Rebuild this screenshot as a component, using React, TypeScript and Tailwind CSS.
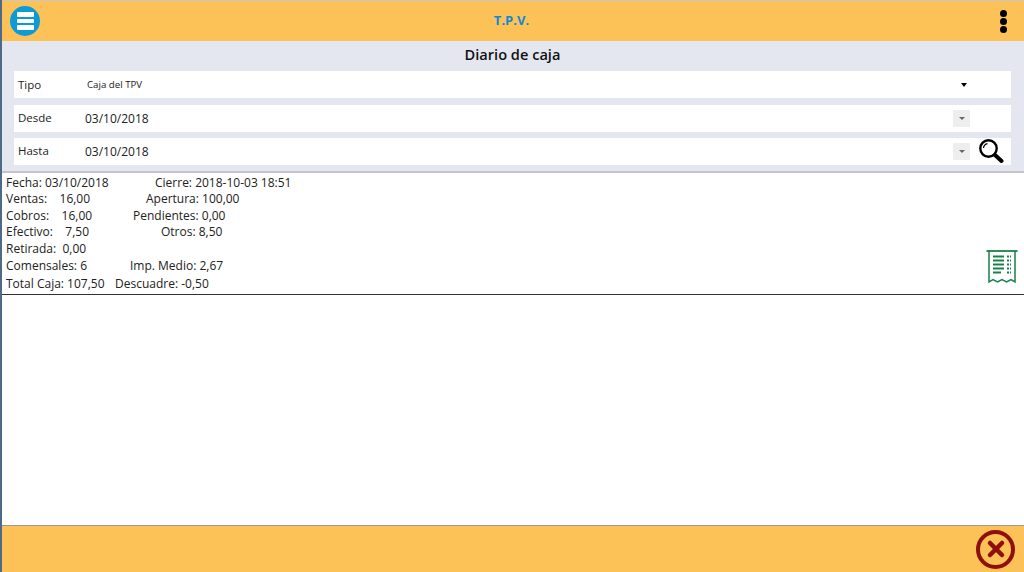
import { X } from 'lucide-react';

const font = { fontFamily: '"Open Sans", "Noto Sans", sans-serif' };

function MenuIcon() {
  return (
    <div className="flex h-[30px] w-[30px] flex-col items-center justify-center gap-[2px] rounded-full bg-[#0d9bd8]">
      <span className="h-[5px] w-[17px] rounded-[1px] bg-white" />
      <span className="h-[4px] w-[17px] rounded-[1px] bg-white" />
      <span className="h-[5px] w-[17px] rounded-[1px] bg-white" />
    </div>
  );
}

function DateArrow() {
  return (
    <div className="flex h-[17px] w-[17px] items-center justify-center bg-[#eeeeee]">
      <span className="h-0 w-0 border-x-[3px] border-t-[3px] border-x-transparent border-t-[#666666]" />
    </div>
  );
}

function SearchIcon() {
  return (
    <svg width="26" height="26" viewBox="0 0 26 26" fill="none" stroke="#000">
      <circle cx="10.5" cy="10.5" r="8.2" strokeWidth="2.4" />
      <path d="M5.5 10a5 5 0 0 1 4-4.4" strokeWidth="1.2" />
      <path d="M17 17l6.5 6" strokeWidth="4" strokeLinecap="round" />
    </svg>
  );
}

function ReceiptIcon() {
  return (
    <svg width="32" height="36" viewBox="0 0 32 36" fill="none" stroke="#1a8048">
      <path d="M0.5 1h31" strokeWidth="1.8" />
      <path d="M3 1v31l4-2.5 4.5 2.5 4.5-2.5 4.5 2.5 4.5-2.5 4 2.5V1" strokeWidth="1.5" />
      <path d="M7 6.5h11M7 10.5h11M7 14.5h11M7 18.5h11M7 22.5h8" strokeWidth="2.2" />
      <path d="M21 6.5h4M21 10.5h4M21 14.5h4M21 18.5h4M21 22.5h4" strokeWidth="2.2" strokeDasharray="2 1" />
    </svg>
  );
}

function FormRow({ label, children, className, labelClass }: { label: string; children: React.ReactNode; className?: string; labelClass?: string }) {
  return (
    <div className={`flex h-[27px] items-center bg-white pl-[4px] text-[#222222] ${className ?? ''}`}>
      <span className={`w-[67px] text-[11.5px] ${labelClass ?? ''}`}>{label}</span>
      {children}
    </div>
  );
}

const summary = [
  { h: 'h-[14px]', left: 'Fecha: 03/10/2018', w: 'w-[149px]', right: 'Cierre: 2018-10-03 18:51' },
  { h: 'h-[17px]', left: 'Ventas:\u00a0\u00a0\u00a0 16,00', w: 'w-[140px]', right: 'Apertura: 100,00' },
  { h: 'h-[17px]', left: 'Cobros:\u00a0\u00a0\u00a0 16,00', w: 'w-[127px]', right: 'Pendientes: 0,00' },
  { h: 'h-[16px]', left: 'Efectivo:\u00a0\u00a0\u00a0 7,50', w: 'w-[155px]', right: 'Otros: 8,50' },
  { h: 'h-[17px]', left: 'Retirada:\u00a0 0,00', w: 'w-[140px]', right: '' },
  { h: 'h-[17px]', left: 'Comensales: 6', w: 'w-[124px]', right: 'Imp. Medio: 2,67' },
  { h: 'h-[20px]', left: 'Total Caja: 107,50', w: 'w-[109px]', right: 'Descuadre: -0,50' },
];

export default function App() {
  return (
    <div className="flex h-[572px] w-[1024px] flex-col overflow-hidden border-l-2 border-[#4f6a86] bg-white" style={font}>
      <header className="grid h-[41px] shrink-0 grid-cols-3 items-center border-t border-[#c8c8c8] bg-[#fcc157] pl-[8px] pr-[17px]">
        <MenuIcon />
        <span className="ml-[6px] justify-self-center text-[13px] font-bold text-[#1488d8]">T.P.V.</span>
        <div className="flex flex-col gap-[1px] justify-self-end">
          <span className="h-[7px] w-[7px] rounded-full bg-black" />
          <span className="h-[7px] w-[7px] rounded-full bg-black" />
          <span className="h-[7px] w-[7px] rounded-full bg-black" />
        </div>
      </header>

      <section className="flex h-[132px] shrink-0 flex-col border-b-2 border-[#c4c6cb] bg-[#e4e7ef] pl-[12px] pr-[13px]">
        <h1 className="mb-[2px] flex h-[28px] items-center justify-center text-[14.6px] font-semibold text-[#111111]">Diario de caja</h1>
        <FormRow label="Tipo">
          <span className="ml-[2px] mt-[2px] text-[9.7px]">Caja del TPV</span>
          <span className="ml-[819px] h-0 w-0 border-x-[3.5px] border-t-[4px] border-x-transparent border-t-black" />
        </FormRow>
        <FormRow label="Desde" className="mt-[7px]" labelClass="-mt-px">
          <span className="mt-[1px] w-[868px] text-[12px]">03/10/2018</span>
          <DateArrow />
        </FormRow>
        <FormRow label="Hasta" className="relative mt-[6px]" labelClass="-mt-[2px]">
          <span className="mt-[1px] w-[868px] text-[12px]">03/10/2018</span>
          <DateArrow />
          <div className="absolute right-[7px] top-0">
            <SearchIcon />
          </div>
        </FormRow>
      </section>

      <section className="flex h-[122px] shrink-0 items-end justify-between border-b border-[#333333] pl-[4px] pr-[6px] text-[12px] text-[#222222]">
        <div className="flex flex-col">
          {summary.map((r) => (
            <div key={r.left} className={`flex items-center ${r.h}`}>
              <span className={r.w}>{r.left}</span>
              <span>{r.right}</span>
            </div>
          ))}
        </div>
        <div className="mb-[8px]">
          <ReceiptIcon />
        </div>
      </section>

      <main className="flex-1 bg-white" />

      <footer className="flex h-[47px] shrink-0 items-center justify-end border-t border-[#999999] bg-[#fcc157] pr-[9px]">
        <div className="flex h-[39px] w-[39px] items-center justify-center rounded-full border-[4px] border-[#8f0f0f]">
          <X size={24} strokeWidth={4.5} color="#8f0f0f" />
        </div>
      </footer>
    </div>
  );
}
